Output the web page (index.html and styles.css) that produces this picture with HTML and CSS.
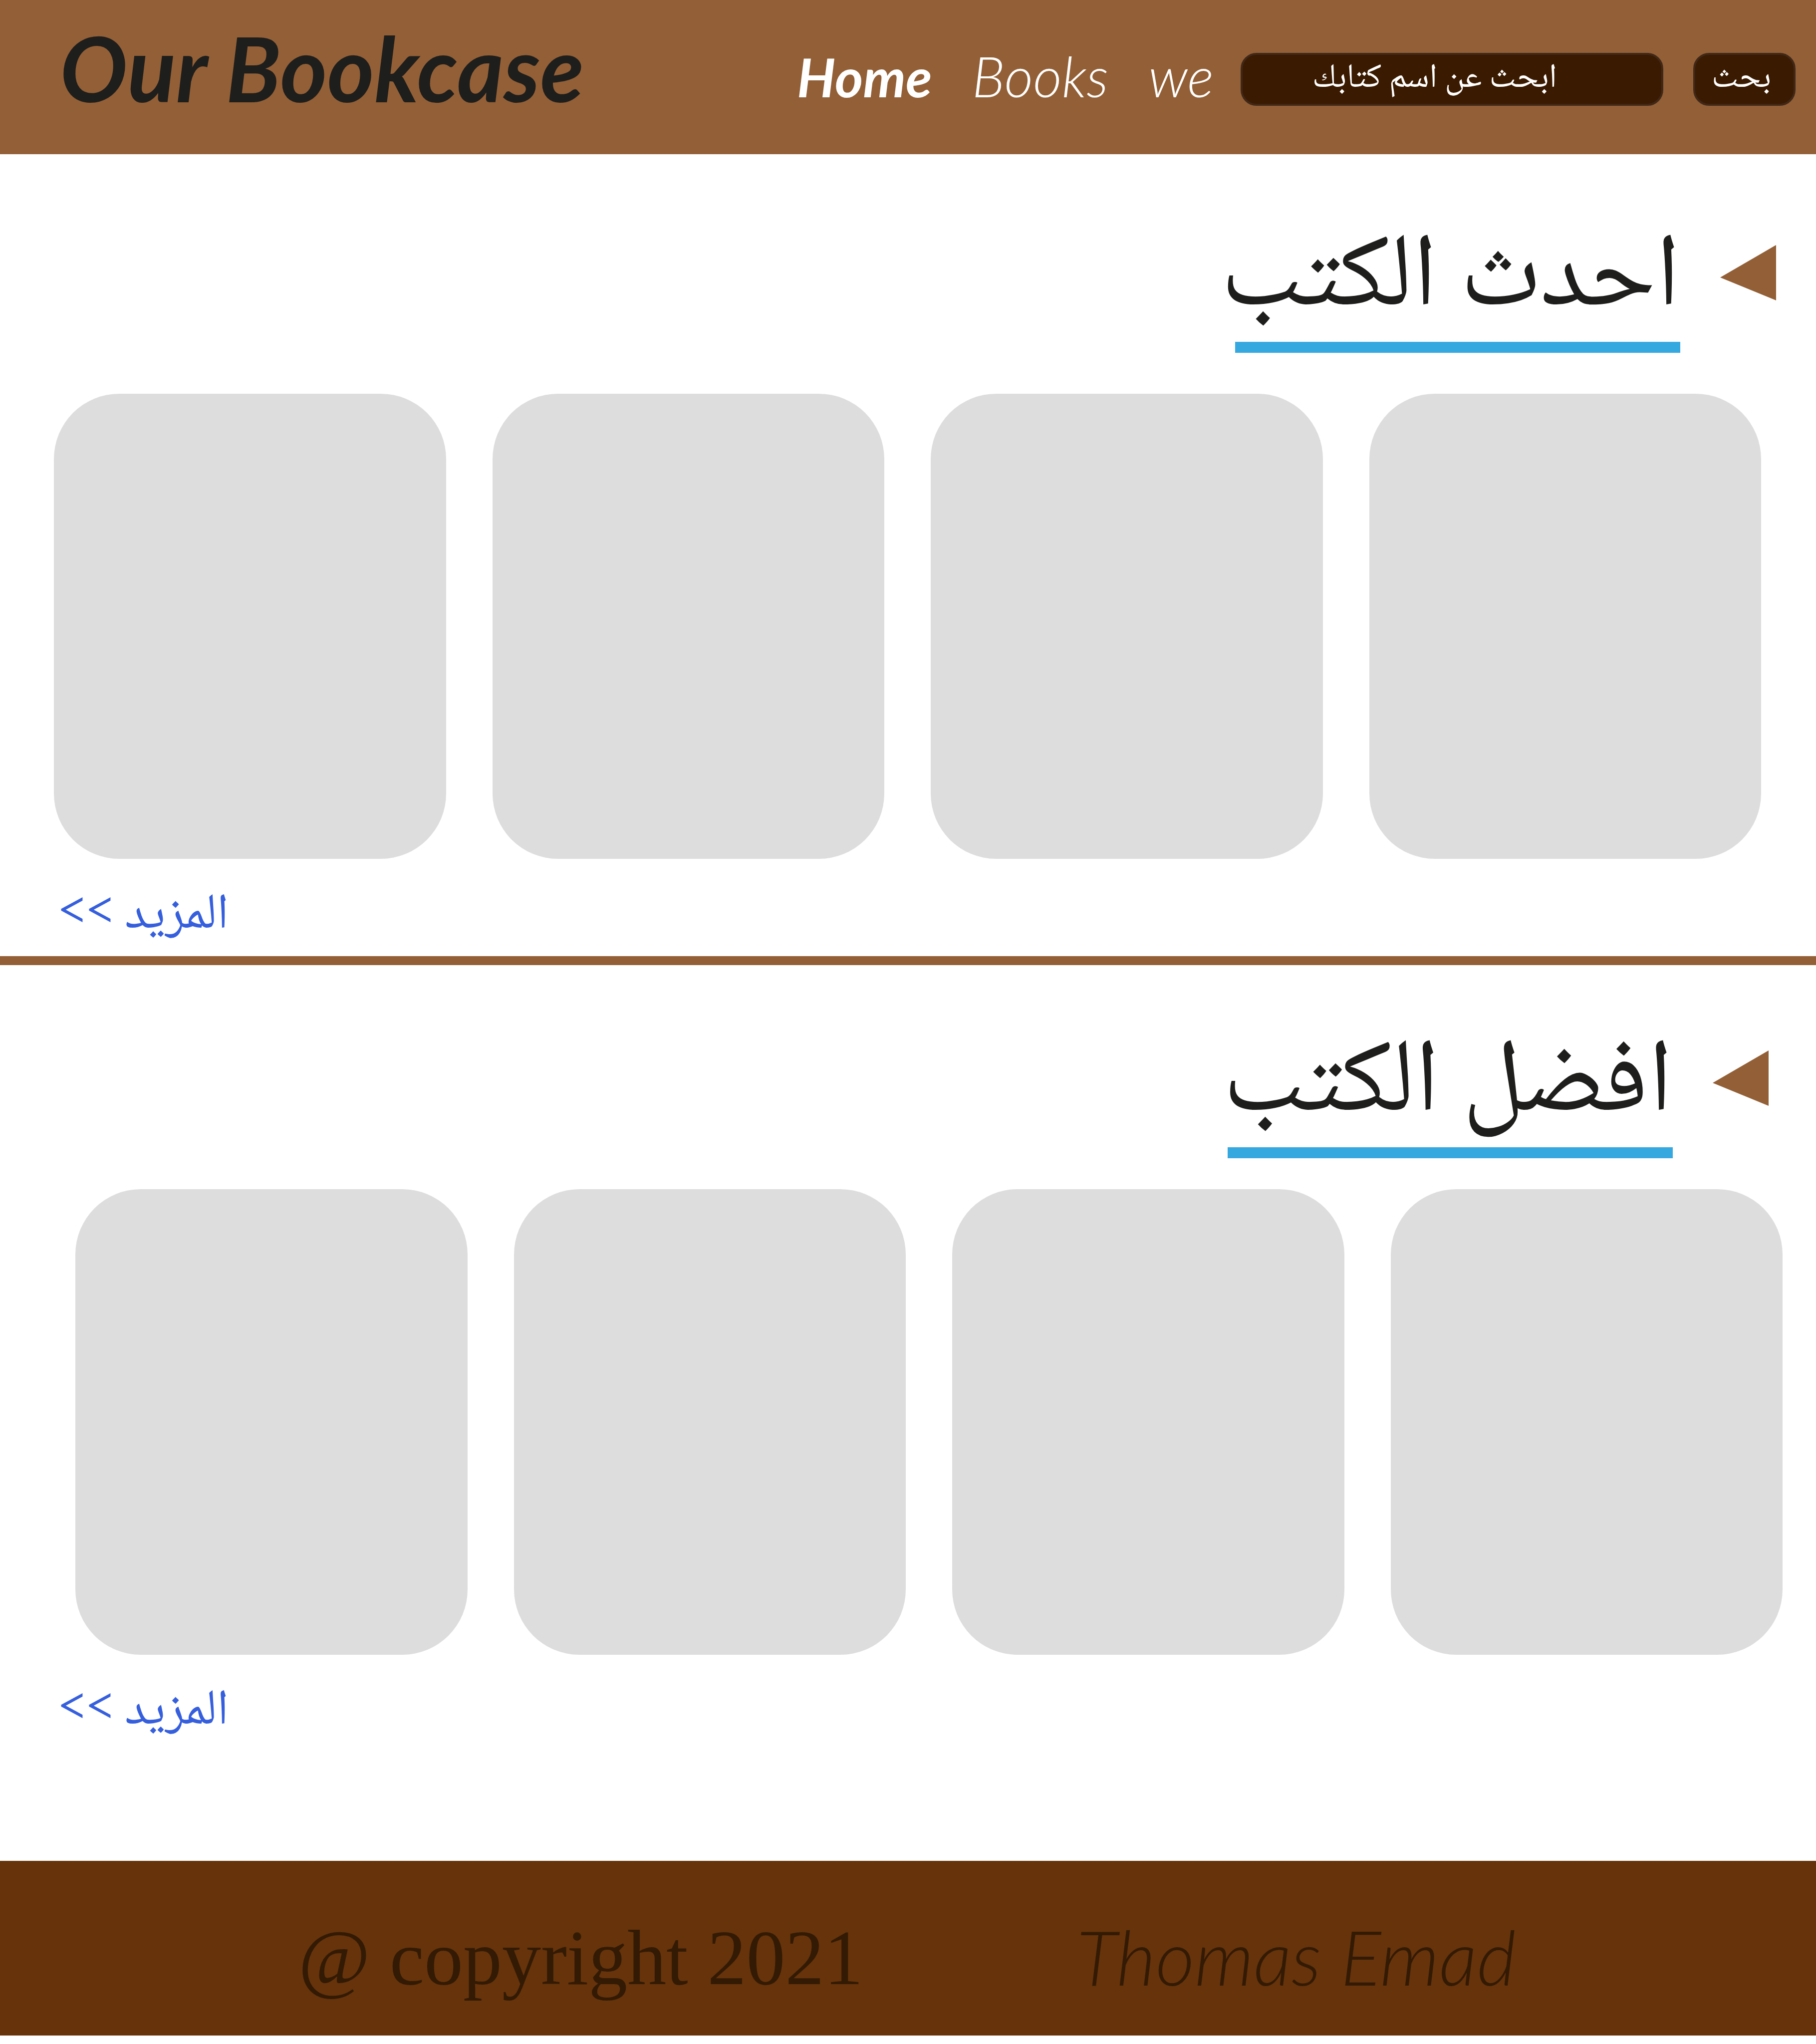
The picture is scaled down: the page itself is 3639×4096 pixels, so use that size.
FILE: index.html
```html
<!DOCTYPE html>
<html lang="ar">
<head>
  <meta charset="utf-8">
  <meta name="viewport" content="width=device-width, initial-scale=1">
  <title>Our Bookcase</title>
  <link rel="stylesheet" href="styles.css">
</head>
<body>
  <header class="site-header">
    <h1 class="logo" lang="en">Our Bookcase</h1>
    <nav class="nav" lang="en">
      <a class="nav-link nav-link-active" href="#home">Home</a>
      <a class="nav-link" href="#books">Books</a>
      <a class="nav-link" href="#we">we</a>
    </nav>
    <form class="search" role="search">
      <input class="search-input" type="search" dir="rtl" aria-label="ابحث عن اسم كتابك" placeholder="ابحث عن اسم كتابك">
      <button class="search-button" type="submit" dir="rtl">بحث</button>
    </form>
  </header>

  <main class="content">
    <section class="shelf" id="home">
      <div class="shelf-head" dir="rtl">
        <svg class="marker" viewBox="0 0 112 111" aria-hidden="true"><path d="M112 0V111L0 65Z"/></svg>
        <h2 class="shelf-title">احدث الكتب</h2>
      </div>
      <div class="books">
        <article class="book"></article>
        <article class="book"></article>
        <article class="book"></article>
        <article class="book"></article>
      </div>
      <a class="more" href="#latest" dir="rtl">المزيد &gt;&gt;</a>
    </section>

    <section class="shelf shelf-best" id="books">
      <div class="shelf-head" dir="rtl">
        <svg class="marker" viewBox="0 0 112 111" aria-hidden="true"><path d="M112 0V111L0 65Z"/></svg>
        <h2 class="shelf-title">افضل الكتب</h2>
      </div>
      <div class="books">
        <article class="book"></article>
        <article class="book"></article>
        <article class="book"></article>
        <article class="book"></article>
      </div>
      <a class="more" href="#best" dir="rtl">المزيد &gt;&gt;</a>
    </section>
  </main>

  <footer class="site-footer" id="we" lang="en">
    <p class="copyright">@ copyright 2021</p>
    <p class="author">Thomas Emad</p>
  </footer>
</body>
</html>
```
FILE: styles.css
```css
:root {
  --brown: #935f36;
  --brown-deep: #66330b;
  --brown-dark: #3a1a00;
  --ink: #1e1e1c;
  --blue: #36a8e0;
  --link: #365fde;
  --card: #dddddd;
  --hand: "Ink Free", "Segoe Print", Lato, sans-serif;
  --arabic: "Adobe Arabic", "Noto Naskh Arabic", Amiri, "Liberation Serif", "DejaVu Sans", serif;
}

* {
  box-sizing: border-box;
}

body {
  margin: 0;
  background: #fff;
  color: var(--ink);
  font-family: var(--arabic);
}

h1,
h2,
p {
  margin: 0;
  font-weight: 400;
}

a {
  text-decoration: none;
}

.site-header {
  display: flex;
  align-items: center;
  height: 309px;
  padding: 0 41px 0 120px;
  background: var(--brown);
}

.logo {
  font: italic 700 180px/200px var(--hand);
  padding-bottom: 40px;
  white-space: nowrap;
}

.nav {
  display: flex;
  align-items: baseline;
  gap: 80px;
  margin-left: auto;
  padding-bottom: 4px;
}

.nav-link {
  color: #fff;
  font: italic 300 112px/128px var(--hand);
}

.nav-link-active {
  font-size: 108px;
  font-weight: 700;
}

.search {
  display: flex;
  gap: 60px;
  margin-left: 54px;
  padding-top: 9px;
}

.search-input,
.search-button {
  height: 106px;
  border: 4px solid #402818;
  border-radius: 32px;
  background: var(--brown-dark);
  color: #fff;
  font: 400 68px/80px var(--arabic);
}

.search-input {
  width: 847px;
  padding: 0 209px 0 20px;
}

.search-input::placeholder {
  color: #fff;
  opacity: 1;
}

.search-button {
  width: 205px;
  padding: 0 12px 0 0;
}

.shelf {
  padding: 136px 110px 0 108px;
}

.shelf-best {
  padding: 125px 67px 0 151px;
  border-top: 18px solid var(--brown);
}

.shelf-head {
  display: flex;
  align-items: flex-start;
  gap: 80px;
  margin-right: -30px;
}

.shelf-best .shelf-head {
  margin-right: 28px;
}

.marker {
  width: 112px;
  height: 111px;
  margin-top: 46px;
  fill: var(--brown);
}

.shelf-title {
  width: 892px;
  border-bottom: 22px solid var(--blue);
  font-size: 208px;
  line-height: 240px;
  white-space: nowrap;
}

.books {
  display: grid;
  grid-template-columns: repeat(4, 1fr);
  gap: 93px;
  margin-top: 82px;
}

.shelf-best .books {
  margin-top: 62px;
}

.book {
  aspect-ratio: 786 / 933;
  border-radius: 131px;
  background: var(--card);
}

.more {
  display: block;
  width: fit-content;
  height: 145px;
  margin: 50px 0 0 8px;
  color: var(--link);
  font-size: 100px;
  line-height: 132px;
}

.shelf-best .more {
  height: 363px;
  margin-left: -35px;
}

.site-footer {
  display: flex;
  align-items: center;
  gap: 428px;
  height: 350px;
  margin-bottom: 17px;
  padding: 40px 0 0 598px;
  background: var(--brown-deep);
  color: #331a04;
  white-space: nowrap;
}

.copyright {
  font: 400 156px/180px "Liberation Serif", serif;
}

.author {
  padding-bottom: 8px;
  font: italic 300 152px/180px var(--hand);
}
```
